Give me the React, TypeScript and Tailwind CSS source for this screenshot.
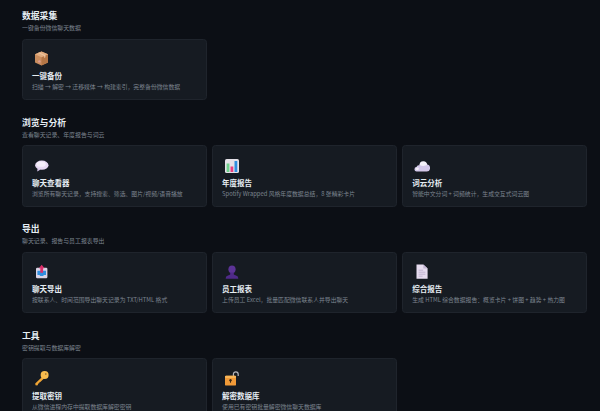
import type { ReactNode } from "react";

function Box() {
  return (
    <svg viewBox="0 0 16 16" className="w-[16px] h-[16px]">
      <path d="M7.5.6 14 3.2v8.4l-6.5 3L1 11.6V3.2z" fill="#c98d5e" />
      <path d="M7.5 6.2 14 3.2v8.4l-6.5 3z" fill="#b57646" />
      <path d="M7.5.6 14 3.2 7.5 6.2 1 3.2z" fill="#e2ad80" />
      <path d="M4 2 10.2 4.7v2.2l1.2-.6V4.2L5.2 1.5z" fill="#eec7a2" />
      <circle cx="5.4" cy="10.4" r="1.2" fill="#dd9a94" />
    </svg>
  );
}

function Speech() {
  return (
    <svg viewBox="0 0 16 16" className="w-[16px] h-[16px]">
      <ellipse cx="7.8" cy="7.2" rx="6.7" ry="4.6" fill="#e6d8f2" />
      <ellipse cx="7.1" cy="6.2" rx="4.6" ry="2.6" fill="#f5eefa" />
      <path d="M3.6 10 3.2 13.4 6.6 11.4z" fill="#d8c6ea" />
    </svg>
  );
}

function Chart() {
  return (
    <svg viewBox="0 0 16 16" className="w-[16px] h-[16px]">
      <rect x="1" y="1" width="14" height="14" rx="1.6" fill="#e4e1e8" />
      <rect x="2.6" y="5.5" width="2.8" height="8.5" fill="#6fd08c" />
      <rect x="6.5" y="8.5" width="2.8" height="5.5" fill="#e8407f" />
      <rect x="10.5" y="3" width="2.8" height="11" fill="#2f8fe0" />
    </svg>
  );
}

function Cloud() {
  return (
    <svg viewBox="0 0 16 16" className="w-[16px] h-[16px]">
      <path d="M2.8 13.5a2.2 2.2 0 0 1-.3-4.4 2.4 2.4 0 0 1 2.9-1.8A4.2 4.2 0 0 1 13.4 6.6a3.5 3.5 0 0 1-.6 6.9z" fill="#d3c8ea" />
      <path d="M5.6 7A3.6 3.6 0 0 1 13 6.8c-1.4 1.4-5 1.6-7.4.2z" fill="#f4f1fa" />
      <ellipse cx="3.2" cy="10.8" rx="1.7" ry="1.4" fill="#f0ecf7" />
    </svg>
  );
}

function Outbox() {
  return (
    <svg viewBox="0 0 16 16" className="w-[16px] h-[16px]">
      <rect x="2" y="3.8" width="11.4" height="10.4" rx="1.2" fill="#d9d3e6" />
      <path d="M3.4 6.8h8.6v4.2H9.9l-.8 1H6.3l-.8-1H3.4z" fill="#2f8fe0" />
      <path d="M7.7.8 10.6 4.2H9.1V8.8H6.3V4.2H4.8z" fill="#d92f6a" />
    </svg>
  );
}

function Person() {
  return (
    <svg viewBox="0 0 16 16" className="w-[16px] h-[16px]">
      <ellipse cx="8" cy="5.3" rx="3.6" ry="3.9" fill="#5c3396" />
      <path d="M6.2 8.6h3.6v2l3.2 1.3c.8.4 1.2 1.1 1.3 2.9H1.7c.1-1.8.5-2.5 1.3-2.9l3.2-1.3z" fill="#4f2a88" />
    </svg>
  );
}

function Doc() {
  return (
    <svg viewBox="0 0 16 16" className="w-[16px] h-[16px]">
      <path d="M2.5.6h6.8l4.3 4v10.2H2.5z" fill="#e6dcef" />
      <path d="M9.3.6l4.3 4H9.3z" fill="#c4b6d4" />
      <path d="M4.6 6.2h4.5M4.6 8.2h6.8M4.6 10.2h6.8M4.6 12.2h4" stroke="#b9aac9" strokeWidth=".8" />
    </svg>
  );
}

function KeyIcon() {
  return (
    <svg viewBox="0 0 16 16" className="w-[16px] h-[16px]">
      <path d="M8.6 5.6 1.2 12.6l.3 1.7 1.8.2.7-.9.1-1 1-.2.2-1 1-.3 3.7-3.5z" fill="#f0a534" />
      <circle cx="10.6" cy="4" r="4" fill="#f8bc4e" />
      <circle cx="11.8" cy="3" r=".8" fill="#7a5a28" />
    </svg>
  );
}

function Unlock() {
  return (
    <svg viewBox="0 0 16 16" className="w-[16px] h-[16px]">
      <path d="M9.4 5.5V3.2a2.4 2.4 0 0 1 4.8 0V5" fill="none" stroke="#b3b5bb" strokeWidth="1.2" />
      <rect x="1" y="4.8" width="11" height="9.8" rx="1.2" fill="#f09a38" />
      <rect x="1" y="4.8" width="11" height="2.2" rx="1" fill="#f8b658" />
      <circle cx="6.5" cy="9.2" r="1.2" fill="#3a2a18" />
      <rect x="6" y="9.2" width="1" height="2.5" fill="#3a2a18" />
    </svg>
  );
}

type Item = { icon: ReactNode; title: string; desc: string };
type Section = { title: string; sub: string; items: Item[] };

const SECTIONS: Section[] = [
  {
    title: "数据采集",
    sub: "一键备份微信聊天数据",
    items: [{ icon: <Box />, title: "一键备份", desc: "扫描 → 解密 → 迁移媒体 → 构建索引，完整备份微信数据" }],
  },
  {
    title: "浏览与分析",
    sub: "查看聊天记录、年度报告与词云",
    items: [
      { icon: <Speech />, title: "聊天查看器", desc: "浏览所有聊天记录，支持搜索、筛选、图片/视频/语音播放" },
      { icon: <Chart />, title: "年度报告", desc: "Spotify Wrapped 风格年度数据总结，8 张精彩卡片" },
      { icon: <Cloud />, title: "词云分析", desc: "智能中文分词 + 词频统计，生成交互式词云图" },
    ],
  },
  {
    title: "导出",
    sub: "聊天记录、报告与员工报表导出",
    items: [
      { icon: <Outbox />, title: "聊天导出", desc: "按联系人、时间范围导出聊天记录为 TXT/HTML 格式" },
      { icon: <Person />, title: "员工报表", desc: "上传员工 Excel，批量匹配微信联系人并导出聊天" },
      { icon: <Doc />, title: "综合报告", desc: "生成 HTML 综合数据报告：概览卡片 + 饼图 + 趋势 + 热力图" },
    ],
  },
  {
    title: "工具",
    sub: "密钥提取与数据库解密",
    items: [
      { icon: <KeyIcon />, title: "提取密钥", desc: "从微信进程内存中提取数据库解密密钥" },
      { icon: <Unlock />, title: "解密数据库", desc: "使用已有密钥批量解密微信聊天数据库" },
    ],
  },
];

export default function App() {
  return (
    <div className="h-[411px] overflow-hidden bg-[#0c0f15] pl-[22px] pr-[13px] pt-[10px] font-['Noto_Sans_CJK_SC','Noto_Sans',sans-serif]">
      {SECTIONS.map((s) => (
        <section key={s.title} className="mb-[16.4px]">
          <h2 className="text-[8.8px] leading-[12px] font-bold text-[#e6edf3]">{s.title}</h2>
          <p className="mt-[1px] text-[5.9px] leading-[9px] text-[#7d8590]">{s.sub}</p>
          <div className="mt-[6.5px] grid grid-cols-3 gap-[5.3px]">
            {s.items.map((it) => (
              <div key={it.title} className="h-[61.7px] rounded-[3.5px] border border-[#1f242c] bg-[#161b22] pl-[9px] pt-[11.5px]">
                <div className="flex h-[16px] pl-[2px]">{it.icon}</div>
                <h3 className="mt-[3px] text-[7.5px] leading-[11px] font-bold text-[#e6edf3]">{it.title}</h3>
                <p className="mt-[1px] text-[5.85px] leading-[9px] text-[#7d8590]">{it.desc}</p>
              </div>
            ))}
          </div>
        </section>
      ))}
    </div>
  );
}
